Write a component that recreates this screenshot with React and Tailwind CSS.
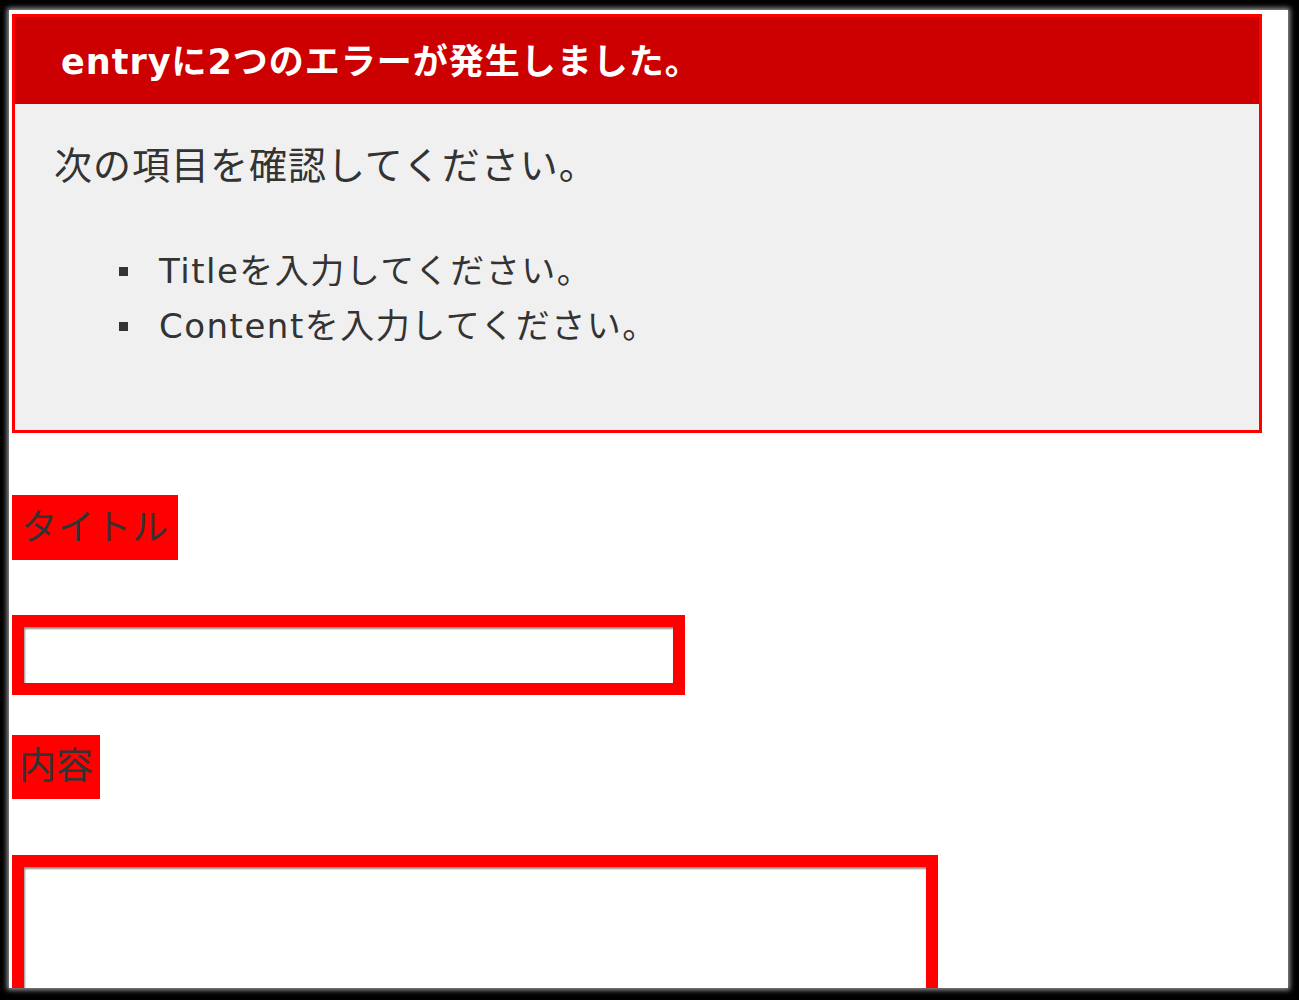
export default function App() {
  const font = { fontFamily: '"DejaVu Sans", "Noto Sans CJK JP", sans-serif' };

  return (
    <div className="w-[1299px] h-[1000px] bg-black pt-[10px] pl-[9px] pr-[11px] pb-[12px] flex" style={font}>
      {/* ページ本体 */}
      <div className="flex-1 bg-white overflow-hidden shadow-[0_0_5px_2px_rgba(255,255,255,0.6)] pl-[3px] pt-[4px] flex flex-col items-start">
        {/* エラー表示 */}
        <div className="w-[1250px] shrink-0 border-[3px] border-[#ff0000] bg-[#f0f0f0]">
          <div className="h-[87px] bg-[#cc0000] flex items-center pl-[46px] pt-[3px] text-white font-bold text-[35px] tracking-[1px]">
            entryに2つのエラーが発生しました。
          </div>
          <div className="pt-[37px] pb-[76px] pl-[39px] text-[#333] ">
            <p className="text-[38px] leading-[50px] tracking-[1px]">次の項目を確認してください。</p>
            <ul className="mt-[53px] text-[34px] leading-[55px] tracking-[1.5px]">
              <li className="flex items-center">
                <span className="w-[9px] h-[9px] bg-[#333] ml-[65px] mr-[31px]"></span>
                Titleを入力してください。
              </li>
              <li className="flex items-center">
                <span className="w-[9px] h-[9px] bg-[#333] ml-[65px] mr-[31px]"></span>
                Contentを入力してください。
              </li>
            </ul>
          </div>
        </div>

        {/* フォーム */}
        <div className="mt-[62px] shrink-0 bg-[#ff0000] h-[65px] px-[9px] flex items-center text-[36px] text-[#333] tracking-[1px]">
          タイトル
        </div>
        <div className="mt-[55px] shrink-0 bg-[#ff0000] p-[12px]">
          <div className="w-[649px] h-[56px] bg-white shadow-[inset_1px_2px_2px_rgba(0,0,0,0.45)]"></div>
        </div>
        <div className="mt-[40px] shrink-0 bg-[#ff0000] h-[64px] px-[7px] flex items-center text-[37px] text-[#333]">
          内容
        </div>
        <div className="mt-[56px] shrink-0 bg-[#ff0000] p-[12px]">
          <div className="w-[902px] h-[300px] bg-white shadow-[inset_1px_2px_2px_rgba(0,0,0,0.45)]"></div>
        </div>
      </div>
    </div>
  );
}
